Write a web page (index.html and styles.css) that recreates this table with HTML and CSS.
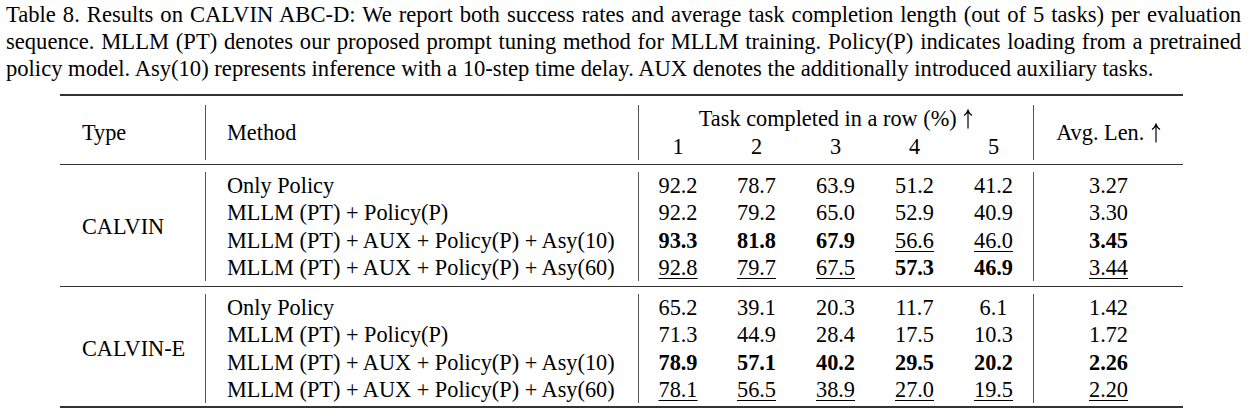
FILE: index.html
```html
<!DOCTYPE html>
<html>
<head>
<meta charset="utf-8">
<link rel="stylesheet" href="styles.css">
</head>
<body>
<div class="page">
  <p class="caption">Table 8. Results on CALVIN ABC-D: We report both success rates and average task completion length (out of 5 tasks) per evaluation sequence. MLLM (PT) denotes our proposed prompt tuning method for MLLM training. Policy(P) indicates loading from a pretrained policy model. Asy(10) represents inference with a 10-step time delay. AUX denotes the additionally introduced auxiliary tasks.</p>
  <table class="results">
    <colgroup>
      <col class="c-type"><col class="c-method">
      <col class="c-num"><col class="c-num"><col class="c-num"><col class="c-num"><col class="c-num">
      <col class="c-avg">
    </colgroup>
    <tbody>
      <tr class="rule heavy"><td colspan="8"></td></tr>
      <tr class="gap g9"><td colspan="8"></td></tr>
      <tr class="head">
        <td class="type" rowspan="2">Type</td>
        <td class="method vl" rowspan="2">Method</td>
        <td class="num vl" colspan="5">Task completed in a row (%) <svg class="arrow" viewBox="0 0 10 20" width="10" height="20" aria-label="↑"><path d="M5 19.5V1.5M1 6.5C3 5.2 4.3 3.4 5 1.2C5.7 3.4 7 5.2 9 6.5" fill="none" stroke="#000" stroke-width="1.2"/></svg></td>
        <td class="num vl" rowspan="2">Avg. Len. <svg class="arrow" viewBox="0 0 10 20" width="10" height="20" aria-label="↑"><path d="M5 19.5V1.5M1 6.5C3 5.2 4.3 3.4 5 1.2C5.7 3.4 7 5.2 9 6.5" fill="none" stroke="#000" stroke-width="1.2"/></svg></td>
      </tr>
      <tr class="head">
        <td class="num vl">1</td><td class="num">2</td><td class="num">3</td><td class="num">4</td><td class="num">5</td>
      </tr>
      <tr class="gap g4"><td colspan="8"></td></tr>
      <tr class="rule"><td colspan="8"></td></tr>
      <tr class="gap g7"><td colspan="8"></td></tr>

      <tr class="row">
        <td class="type" rowspan="4">CALVIN</td>
        <td class="method vl">Only Policy</td>
        <td class="num vl">92.2</td><td class="num">78.7</td><td class="num">63.9</td><td class="num">51.2</td><td class="num">41.2</td>
        <td class="num vl">3.27</td>
      </tr>
      <tr class="row">
        <td class="method vl">MLLM (PT) + Policy(P)</td>
        <td class="num vl">92.2</td><td class="num">79.2</td><td class="num">65.0</td><td class="num">52.9</td><td class="num">40.9</td>
        <td class="num vl">3.30</td>
      </tr>
      <tr class="row">
        <td class="method vl">MLLM (PT) + AUX + Policy(P) + Asy(10)</td>
        <td class="num vl"><b>93.3</b></td><td class="num"><b>81.8</b></td><td class="num"><b>67.9</b></td><td class="num"><u>56.6</u></td><td class="num"><u>46.0</u></td>
        <td class="num vl"><b>3.45</b></td>
      </tr>
      <tr class="row">
        <td class="method vl">MLLM (PT) + AUX + Policy(P) + Asy(60)</td>
        <td class="num vl"><u>92.8</u></td><td class="num"><u>79.7</u></td><td class="num"><u>67.5</u></td><td class="num"><b>57.3</b></td><td class="num"><b>46.9</b></td>
        <td class="num vl"><u>3.44</u></td>
      </tr>

      <tr class="gap g5"><td colspan="8"></td></tr>
      <tr class="rule"><td colspan="8"></td></tr>
      <tr class="gap g7"><td colspan="8"></td></tr>

      <tr class="row">
        <td class="type" rowspan="4">CALVIN-E</td>
        <td class="method vl">Only Policy</td>
        <td class="num vl">65.2</td><td class="num">39.1</td><td class="num">20.3</td><td class="num">11.7</td><td class="num">6.1</td>
        <td class="num vl">1.42</td>
      </tr>
      <tr class="row">
        <td class="method vl">MLLM (PT) + Policy(P)</td>
        <td class="num vl">71.3</td><td class="num">44.9</td><td class="num">28.4</td><td class="num">17.5</td><td class="num">10.3</td>
        <td class="num vl">1.72</td>
      </tr>
      <tr class="row">
        <td class="method vl">MLLM (PT) + AUX + Policy(P) + Asy(10)</td>
        <td class="num vl"><b>78.9</b></td><td class="num"><b>57.1</b></td><td class="num"><b>40.2</b></td><td class="num"><b>29.5</b></td><td class="num"><b>20.2</b></td>
        <td class="num vl"><b>2.26</b></td>
      </tr>
      <tr class="row">
        <td class="method vl">MLLM (PT) + AUX + Policy(P) + Asy(60)</td>
        <td class="num vl"><u>78.1</u></td><td class="num"><u>56.5</u></td><td class="num"><u>38.9</u></td><td class="num"><u>27.0</u></td><td class="num"><u>19.5</u></td>
        <td class="num vl"><u>2.20</u></td>
      </tr>

      <tr class="gap g3"><td colspan="8"></td></tr>
      <tr class="rule heavy"><td colspan="8"></td></tr>
    </tbody>
  </table>
</div>
</body>
</html>
```

FILE: styles.css
```css
html, body {
  margin: 0;
  padding: 0;
  background: #ffffff;
}

body {
  font-family: "Liberation Serif", "Times New Roman", serif;
  color: #000;
}

.page {
  width: 1252px;
  height: 416px;
  padding: 1px 11px 0 6px;
  box-sizing: border-box;
  overflow: hidden;
}

.caption {
  margin: 0;
  font-size: 22.6px;
  line-height: 27px;
  text-align: justify;
}

.results {
  margin: 12px 0 0 54px;
  width: 1123px;
  table-layout: fixed;
  border-collapse: separate;
  border-spacing: 0;
  font-size: 22.3px;
}

.c-type { width: 145px; }
.c-method { width: 433px; }
.c-num { width: 79px; }
.c-avg { width: 150px; }

.results td {
  padding: 0;
  white-space: nowrap;
  vertical-align: middle;
}

.rule td {
  height: 1px;
  background: #333;
  font-size: 0;
  line-height: 0;
}

.rule.heavy td {
  height: 2px;
}

.gap td {
  font-size: 0;
  line-height: 0;
}
.g3 td { height: 3px; }
.g4 td { height: 4px; }
.g5 td { height: 5px; }
.g7 td { height: 7px; }
.g9 td { height: 9px; }

.head td {
  height: 27.5px;
  line-height: 27.5px;
}

.row td {
  height: 27.25px;
  line-height: 27.25px;
}

.type {
  padding-left: 22px !important;
  text-align: left;
}

.method {
  padding-left: 21px !important;
  text-align: left;
}

.num {
  text-align: center;
}

.vl {
  border-left: 1px solid #555;
}

.arrow {
  display: inline-block;
  width: 10px;
  height: 20px;
  vertical-align: -3px;
  margin-left: 1px;
}

.results u {
  text-decoration: underline;
  text-decoration-thickness: 1px;
  text-underline-offset: 3px;
}

.results b {
  font-weight: 700;
}
```
